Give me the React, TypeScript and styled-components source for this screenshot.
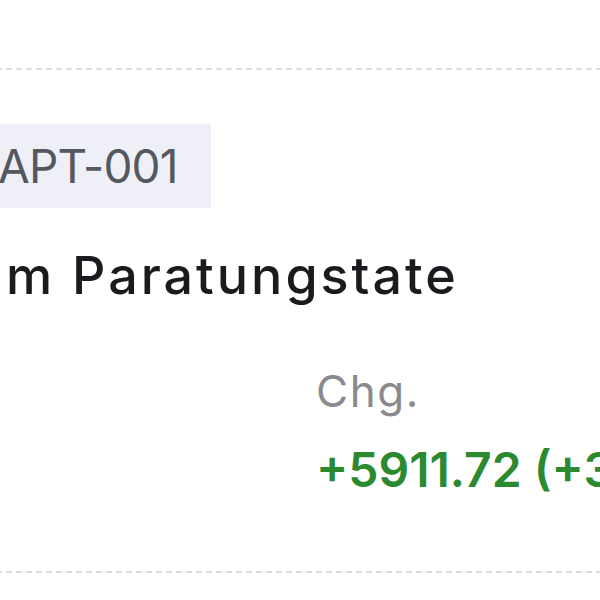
import styled, { createGlobalStyle } from 'styled-components';

const GlobalStyle = createGlobalStyle`
  html, body {
    margin: 0;
    padding: 0;
    background: #ffffff;
    overflow: hidden;
  }
  body {
    font-family: 'Inter', 'Open Sans', sans-serif;
  }
`;

export const Viewport = styled.div`
  width: 600px;
  height: 600px;
  overflow: hidden;
  background: #ffffff;
`;

export const Card = styled.div`
  margin-left: -14px;
  width: 800px;
  padding-top: 68px;
`;

export const Divider = styled.div`
  height: 2px;
  background: repeating-linear-gradient(
    to right,
    #dcdcdc 0,
    #dcdcdc 6px,
    transparent 6px,
    transparent 10px
  );
`;

export const Body = styled.div`
  padding: 54px 0 73px;
  display: flex;
  flex-direction: column;
`;

export const Tag = styled.span`
  align-self: flex-start;
  background: #eff0f7;
  color: #55585f;
  font-size: 46px;
  font-weight: 400;
  line-height: 84px;
  padding: 0 33px 0 12px;
  letter-spacing: -0.8px;
`;

export const Title = styled.h1`
  margin: 36px 0 0 20px;
  font-size: 52px;
  font-weight: 500;
  color: #1b1b1f;
  line-height: 64px;
  letter-spacing: 3px;
`;

export const Stats = styled.div`
  margin-top: 58px;
  display: grid;
  grid-template-columns: 330px 1fr;
`;

export const Stat = styled.div`
  display: flex;
  flex-direction: column;
  gap: 26px;
`;

export const StatLabel = styled.span`
  font-size: 44px;
  color: #8a8a8e;
  line-height: 50px;
  letter-spacing: 1.5px;
`;

type ValueProps = { $tone?: 'up' | 'down' };

export const StatValue = styled.span<ValueProps>`
  font-size: 48px;
  font-weight: 600;
  line-height: 56px;
  white-space: nowrap;
  color: ${p => (p.$tone === 'down' ? '#c62828' : '#2b8a2f')};
`;

export default function App() {
  return (
    <Viewport>
      <GlobalStyle />
      <Card>
        <Divider />
        <Body>
          <Tag>APT-001</Tag>
          <Title>m Paratungstate</Title>
          <Stats>
            <Stat />
            <Stat>
              <StatLabel>Chg.</StatLabel>
              <StatValue $tone='up'>+5911.72 (+3.4%)</StatValue>
            </Stat>
          </Stats>
        </Body>
        <Divider />
      </Card>
    </Viewport>
  );
}
